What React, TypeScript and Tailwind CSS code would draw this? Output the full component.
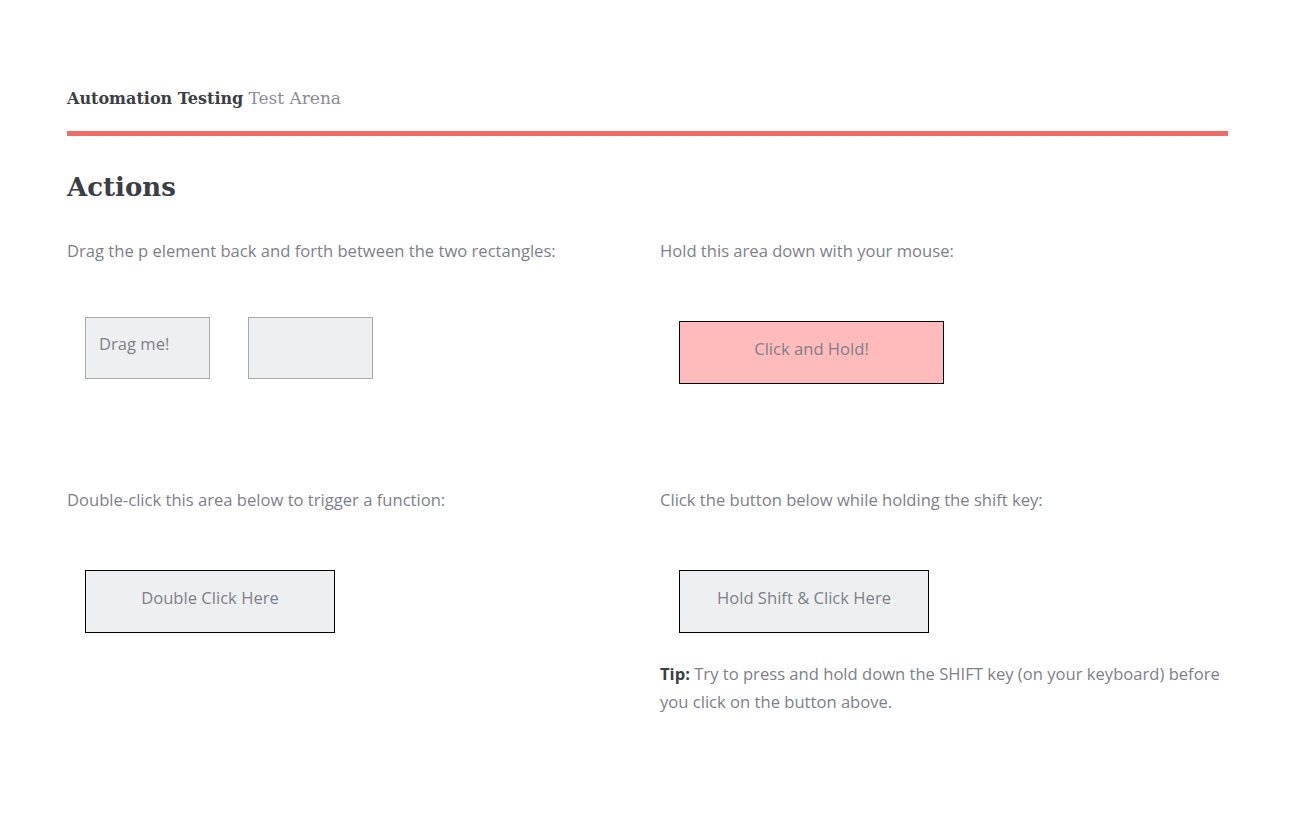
import React from 'react';

const body = { fontFamily: '"Open Sans", "Liberation Sans", sans-serif' };
const slab = { fontFamily: '"DejaVu Serif", "Liberation Serif", serif' };

const App: React.FC = () => {
  return (
    <div className="min-h-screen bg-white px-[67px] pt-[84px] text-[#7d7f89]" style={body}>
      {/* Header */}
      <div className="text-[16px] leading-[28px]" style={slab}>
        <span className="font-bold text-[#3b3e44]">Automation Testing</span>{' '}
        <span className="text-[17px] text-[#8a8c94]">Test Arena</span>
      </div>
      <div className="mt-[18px] h-[5px] bg-[#f26b6b]" />

      <h1 className="mt-[33px] text-[26px] font-bold leading-[36px] text-[#3b3e44]" style={slab}>
        Actions
      </h1>

      {/* Row 1 */}
      <div className="mt-[34px] grid grid-cols-[593px_1fr] text-[16.6px]">
        <div>
          <p className="leading-[24px]">Drag the p element back and forth between the two rectangles:</p>
          <div className="mt-[54px] flex gap-[38px] pl-[18px]">
            <div className="h-[62px] w-[125px] border border-[#aaaaaa] bg-[#eeeff1] px-[13px] pt-[14px]">
              <p className="leading-[24px]">Drag me!</p>
            </div>
            <div className="h-[62px] w-[125px] border border-[#aaaaaa] bg-[#eeeff1]" />
          </div>
        </div>
        <div>
          <p className="leading-[24px]">Hold this area down with your mouse:</p>
          <div className="mt-[58px] pl-[19px]">
            <div className="flex h-[63px] w-[265px] items-center justify-center border border-black bg-[#ffbbbb] pb-[7px]">
              Click and Hold!
            </div>
          </div>
        </div>
      </div>

      {/* Row 2 */}
      <div className="mt-[104px] grid grid-cols-[593px_1fr] text-[16.6px]">
        <div>
          <p className="leading-[24px]">Double-click this area below to trigger a function:</p>
          <div className="mt-[58px] pl-[18px]">
            <div className="flex h-[63px] w-[250px] items-center justify-center border border-black bg-[#eeeff1] pb-[7px]">
              Double Click Here
            </div>
          </div>
        </div>
        <div>
          <p className="leading-[24px]">Click the button below while holding the shift key:</p>
          <div className="mt-[58px] pl-[19px]">
            <div className="flex h-[63px] w-[250px] items-center justify-center border border-black bg-[#eeeff1] pb-[7px]">
              Hold Shift &amp; Click Here
            </div>
          </div>
          <p className="mt-[27px] leading-[28px]">
            <strong className="font-bold text-[#3b3e44]">Tip:</strong> Try to press and hold down the SHIFT key (on your
            keyboard) before you click on the button above.
          </p>
        </div>
      </div>
    </div>
  );
};

export default App;
